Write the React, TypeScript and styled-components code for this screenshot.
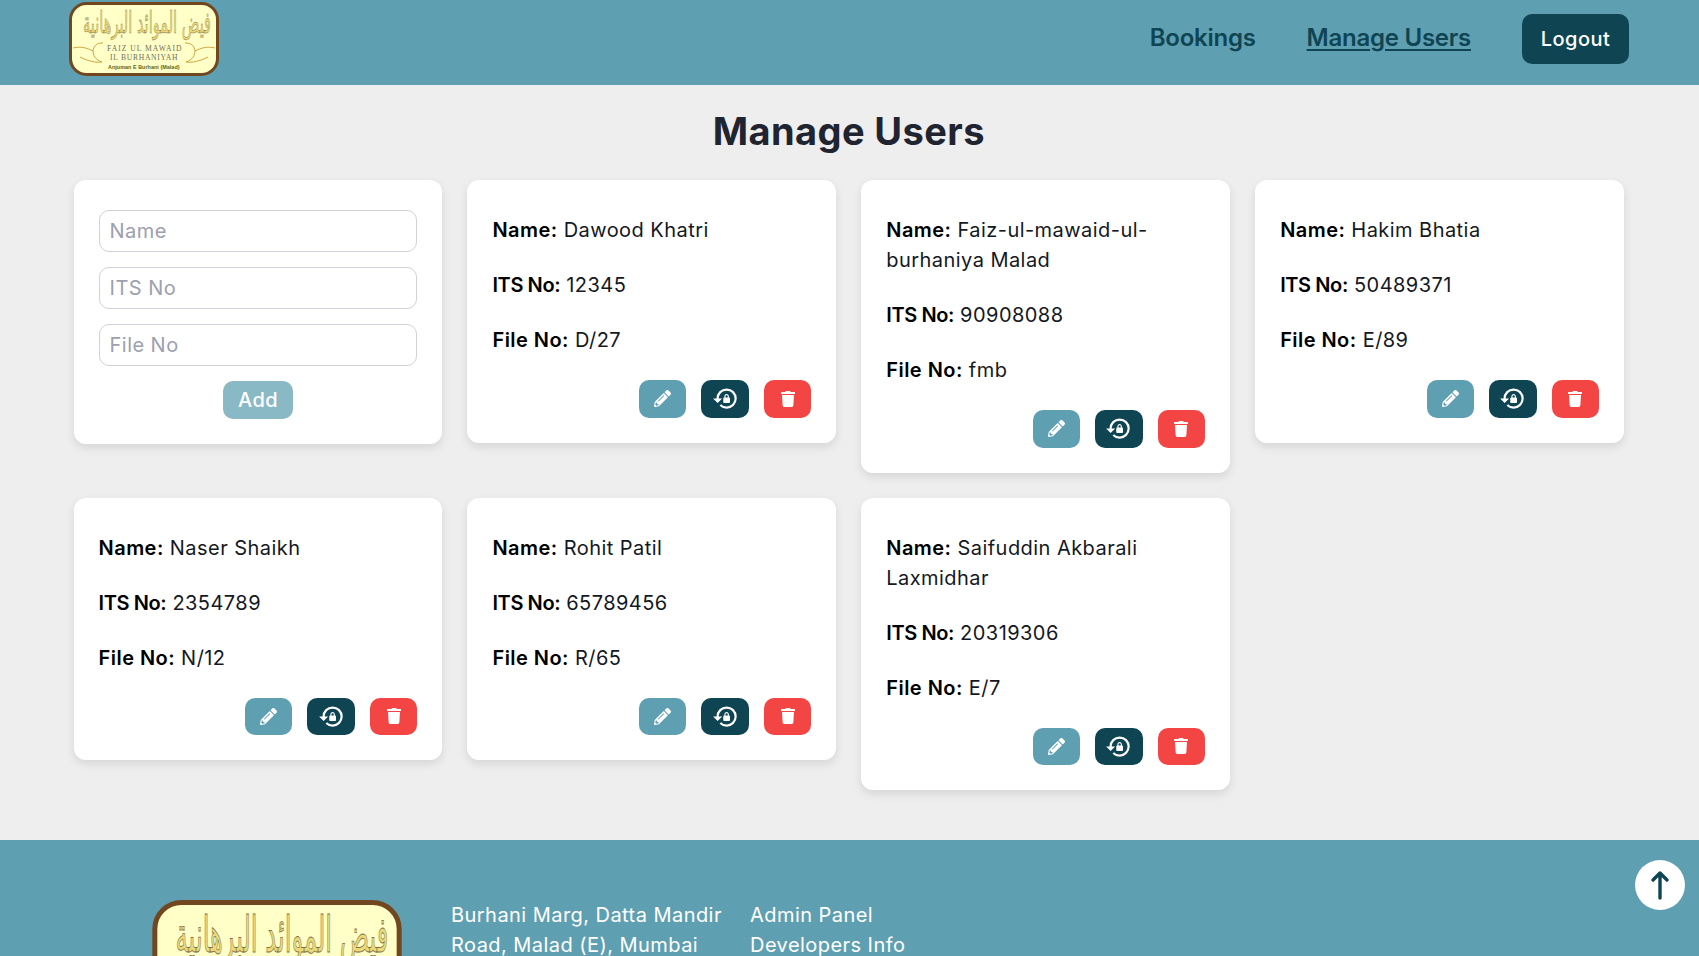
import React from "react";
import styled, { createGlobalStyle } from "styled-components";
import { FaPencilAlt, FaTrash } from "react-icons/fa";
import { MdLockReset } from "react-icons/md";

const TEAL = "#5f9fb2";
const DARK = "#0f4552";
const FONT = `Inter, "Noto Sans", "Liberation Sans", sans-serif`;

const Global = createGlobalStyle`
  html, body { margin: 0; padding: 0; height: 956px; overflow: hidden; background: #eeeeee; }
  * { box-sizing: border-box; }
  body { font-family: ${FONT}; color: #111; letter-spacing: 0.45px; }
  button, input { letter-spacing: inherit; }
`;

const Header = styled.header`
  height: 85px;
  background: ${TEAL};
  display: flex;
  align-items: center;
  justify-content: space-between;
  padding: 0 70px 7px 69px;
`;
const HeaderLogo = styled.div`
  width: 150px;
  height: 74px;
`;
const Nav = styled.nav`
  display: flex;
  align-items: center;
  gap: 51px;
`;
const NavLink = styled.a<{ $active?: boolean }>`
  font-size: 24px;
  line-height: 30px;
  margin-top: -2px;
  font-weight: 600;
  letter-spacing: -0.25px;
  color: ${DARK};
  text-decoration: ${(p) => (p.$active ? "underline" : "none")};
  text-decoration-thickness: 2px;
  text-underline-offset: 3px;
`;
const LogoutButton = styled.button`
  width: 107px;
  height: 50px;
  border: 0;
  border-radius: 10px;
  background: ${DARK};
  color: #fff;
  font: 500 20px ${FONT};
`;
const Main = styled.main`
  padding: 19px 75px 50px 73.6px;
`;
const Title = styled.h1`
  margin: 0 0 22px;
  text-align: center;
  font-size: 38px;
  line-height: 54px;
  font-weight: 700;
  letter-spacing: 0.4px;
  color: #1f2430;
`;
const Grid = styled.div`
  display: grid;
  grid-template-columns: repeat(4, 1fr);
  gap: 25px;
  align-items: start;
`;
const Card = styled.div`
  background: #fff;
  border-radius: 12px;
  box-shadow: 0 4px 10px rgba(0, 0, 0, 0.1);
  padding: 35px 25px 25px;
`;
const FormCard = styled(Card)`
  padding-top: 30px;
  display: flex;
  flex-direction: column;
  align-items: center;
  gap: 15px;
`;
const Input = styled.input`
  width: 100%;
  height: 42px;
  border: 1px solid #d1d1da;
  border-radius: 10px;
  padding: 0 10px;
  font: 400 20px ${FONT};
  outline: none;
  &::placeholder { color: #9ca0b0; opacity: 1; }
`;
const AddButton = styled.button`
  width: 70px;
  height: 38px;
  border: 0;
  border-radius: 10px;
  background: #8ab9c6;
  color: #fff;
  font: 500 20px ${FONT};
`;
const Line = styled.p`
  margin: 0 0 25px;
  font-size: 20px;
  line-height: 30px;
  color: #14181f;
`;
const Label = styled.b<{ $narrow?: boolean }>`
  font-weight: 600;
  color: #000;
  letter-spacing: ${(p) => (p.$narrow ? "-0.4px" : "inherit")};
`;
const Actions = styled.div`
  display: flex;
  justify-content: flex-end;
  gap: 15px;
`;
const IconButton = styled.button<{ $bg: string }>`
  width: 47.5px;
  height: 37.5px;
  border: 0;
  border-radius: 10px;
  background: ${(p) => p.$bg};
  color: #fff;
  display: flex;
  align-items: center;
  justify-content: center;
  padding: 0;
`;
const Footer = styled.footer`
  background: ${TEAL};
  height: 300px;
  padding: 60px 0 0 152px;
  display: flex;
  gap: 24px;
  color: #fff;
`;
const FooterLogo = styled.div`
  width: 250px;
  height: 123px;
  margin-right: 25px;
`;
const FooterColumn = styled.div<{ $width: string }>`
  width: ${(p) => p.$width};
  font-size: 20px;
  line-height: 30px;
`;
const ColumnText = styled.div``;
const ScrollTop = styled.button`
  position: fixed;
  right: 14px;
  bottom: 46px;
  width: 50px;
  height: 50px;
  border-radius: 50%;
  border: 0;
  background: #fff;
  color: ${DARK};
  display: flex;
  align-items: center;
  justify-content: center;
  padding: 0;
`;

const Logo = () => (
  <svg viewBox="0 0 150 74" width="100%" height="100%" role="img" aria-label="Faiz ul Mawaid il Burhaniyah logo">
    <rect x="1.5" y="1.5" width="147" height="71" rx="16" fill="#ffffc8" stroke="#70471f" strokeWidth="3" />
    <text x="78" y="31" textAnchor="middle" fontFamily="'DejaVu Sans', sans-serif" fontSize="30" fill="#eadb78" stroke="#7d6a45" strokeWidth="0.5" textLength="128" lengthAdjust="spacingAndGlyphs" letterSpacing="0">فيض الموائد البرهانية</text>
    <path d="M4 46c8-2 14 0 20 3M34 41c-12-1-14 15-1 19 -6 1-14-1-22-5M146 46c-8-2-14 0-20 3M116 41c12-1 14 15 1 19 6 1 14-1 22-5" fill="none" stroke="#cfa544" strokeWidth="1" />
    <text x="75.5" y="49" textAnchor="middle" fontFamily="'Liberation Serif', serif" fontSize="7.6" fill="#6f6f5a" textLength="75" lengthAdjust="spacing">FAIZ UL MAWAID</text>
    <text x="75" y="58" textAnchor="middle" fontFamily="'Liberation Serif', serif" fontSize="7.6" fill="#6f6f5a" textLength="68" lengthAdjust="spacing">IL BURHANIYAH</text>
    <text x="75" y="67" textAnchor="middle" fontFamily="'Liberation Sans', sans-serif" fontSize="5.4" fontWeight="700" fill="#5a6320" textLength="72" lengthAdjust="spacing">Anjuman E Burhani (Malad)</text>
  </svg>
);

const users = [
  { name: "Dawood Khatri", its: "12345", file: "D/27" },
  { name: "Faiz-ul-mawaid-ul-burhaniya Malad", its: "90908088", file: "fmb" },
  { name: "Hakim Bhatia", its: "50489371", file: "E/89" },
  { name: "Naser Shaikh", its: "2354789", file: "N/12" },
  { name: "Rohit Patil", its: "65789456", file: "R/65" },
  { name: "Saifuddin Akbarali Laxmidhar", its: "20319306", file: "E/7" },
];

export default function App() {
  return (
    <>
      <Global />
      <Header>
        <HeaderLogo><Logo /></HeaderLogo>
        <Nav>
          <NavLink>Bookings</NavLink>
          <NavLink $active>Manage Users</NavLink>
          <LogoutButton>Logout</LogoutButton>
        </Nav>
      </Header>
      <Main>
        <Title>Manage Users</Title>
        <Grid>
          <FormCard>
            <Input placeholder="Name" />
            <Input placeholder="ITS No" />
            <Input placeholder="File No" />
            <AddButton>Add</AddButton>
          </FormCard>
          {users.map((u) => (
            <Card key={u.its}>
              <Line><Label>Name:</Label> {u.name}</Line>
              <Line><Label $narrow>ITS No:</Label> {u.its}</Line>
              <Line><Label>File No:</Label> {u.file}</Line>
              <Actions>
                <IconButton $bg={TEAL} aria-label="Edit"><FaPencilAlt size={17} /></IconButton>
                <IconButton $bg={DARK} aria-label="Reset password"><MdLockReset size={27} /></IconButton>
                <IconButton $bg="#f44545" aria-label="Delete"><FaTrash size={16} /></IconButton>
              </Actions>
            </Card>
          ))}
        </Grid>
      </Main>
      <Footer>
        <FooterLogo><Logo /></FooterLogo>
        <FooterColumn $width="275px">
          <ColumnText>Burhani Marg, Datta Mandir Road, Malad (E), Mumbai</ColumnText>
        </FooterColumn>
        <FooterColumn $width="220px">
          <ColumnText>Admin Panel</ColumnText>
          <ColumnText>Developers Info</ColumnText>
        </FooterColumn>
      </Footer>
      <ScrollTop aria-label="Scroll to top">
        <svg width="24" height="30" viewBox="0 0 24 30" fill="none" stroke="currentColor" strokeWidth="3.4" strokeLinecap="round" strokeLinejoin="round">
          <path d="M12 28V3M5 10 12 3l7 7" />
        </svg>
      </ScrollTop>
    </>
  );
}
